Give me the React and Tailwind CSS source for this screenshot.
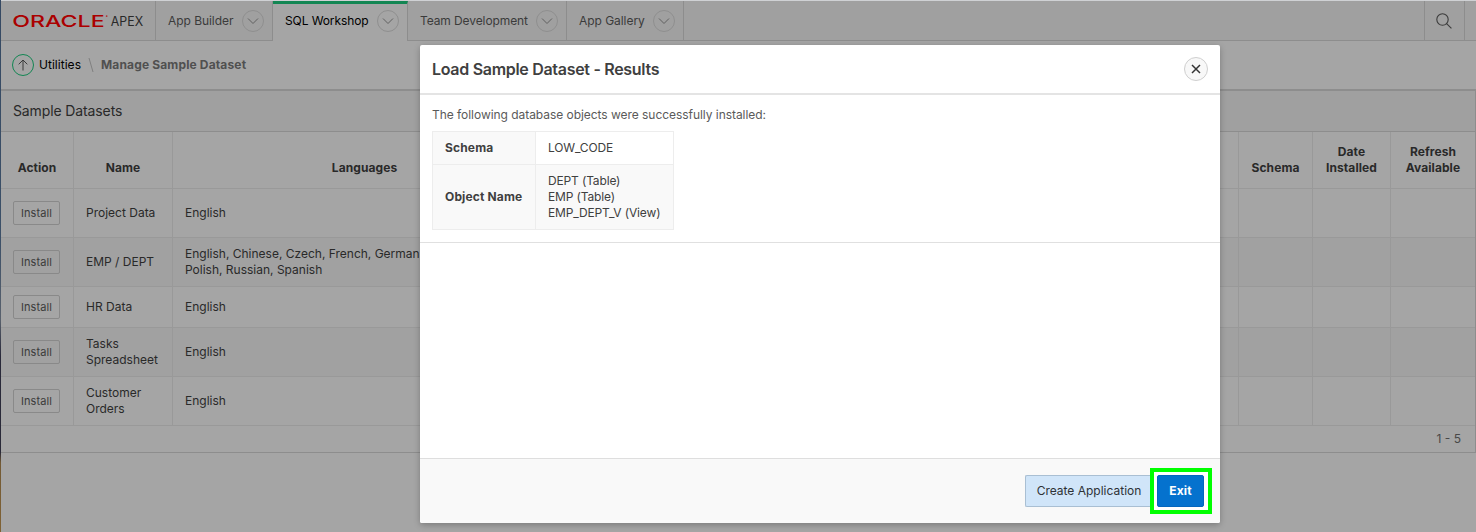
import React from "react";

const tabs = [
  { label: "App Builder", width: "w-[117px]", tracking: "tracking-[-0.05px]" },
  { label: "SQL Workshop", width: "w-[135px]", tracking: "tracking-[-0.1px]", active: true },
  { label: "Team Development", width: "w-[159px]", tracking: "tracking-[-0.1px]" },
  { label: "App Gallery", width: "w-[117px]", tracking: "tracking-[-0.05px]" },
];

const rows = [
  { name: ["Project Data"], languages: ["English"], height: "h-[49px]" },
  { name: ["EMP / DEPT"], languages: ["English, Chinese, Czech, French, German,", "Polish, Russian, Spanish"], height: "h-[49px]", alt: true },
  { name: ["HR Data"], languages: ["English"], height: "h-[41px]" },
  { name: ["Tasks", "Spreadsheet"], languages: ["English"], height: "h-[49px]", alt: true },
  { name: ["Customer", "Orders"], languages: ["English"], height: "h-[49px]" },
];

const columns = "grid grid-cols-[73px_99px_384px_682px_74px_78px_84px]";
const cell = "border-b border-r border-[#999999]";

function Lines({ items }) {
  return (
    <div>
      {items.map((item) => (
        <div key={item} className="whitespace-nowrap">{item}</div>
      ))}
    </div>
  );
}

function Logo() {
  return (
    <svg width="143" height="24" viewBox="0 0 143 24" className="block">
      <text x="-0.7" y="18" textLength="93" lengthAdjust="spacingAndGlyphs" fontFamily="Inter, sans-serif" fontSize="16.600" fontWeight="500" fill="#ab0000">ORACLE</text>
      <circle cx="94.3" cy="7" r="0.9" fill="#b03030" />
      <text x="98.500" y="17.500" textLength="32.500" lengthAdjust="spacingAndGlyphs" fontFamily="Inter, sans-serif" fontSize="13.500" fill="#292929">APEX</text>
    </svg>
  );
}

function Tab({ tab }) {
  return (
    <div
      className={
        "flex h-10 shrink-0 items-center justify-between border-r border-r-[#8d8d8d] pl-3 pr-2 " +
        tab.width +
        (tab.active ? " border-t-[3px] border-t-[#138653] bg-[#a5a5a5] text-black" : " border-b border-b-[#8d8d8d] text-[#3b3b3b]")
      }
    >
      <span className={"whitespace-nowrap " + tab.tracking + (tab.active ? " -mt-[3px]" : "")}>{tab.label}</span>
      <span className={"flex size-[22px] items-center justify-center rounded-full border border-[#8f8f8f]" + (tab.active ? " -mt-[3px]" : "")}>
        <svg width="12" height="8" viewBox="0 0 12 8" fill="none" stroke="#606060" strokeWidth="1">
          <path d="M1 1.500 6 6.500l5-5" />
        </svg>
      </span>
    </div>
  );
}

function Background() {
  return (
    <div className="flex h-[532px] w-[1476px] bg-[#a5a5a5]">
      <div className="w-px shrink-0 bg-[linear-gradient(to_bottom,#354963_0,#3c5068_45%,#59616d_60%,#29293a_67%,#292938_85%,#735a35_87%,#806234_100%)]" />
      <div className="flex min-w-0 grow flex-col">
        <div className="h-px shrink-0 bg-[#cfd1d4]" />
        <header className="flex h-10 shrink-0 bg-[#a0a0a0]">
          <div className="flex w-[155px] shrink-0 items-center border-b border-r border-[#8d8d8d] pl-3">
            <Logo />
          </div>
          {tabs.map((tab) => <Tab key={tab.label} tab={tab} />)}
          <div className="grow border-b border-r border-[#8d8d8d]" />
          <div className="flex w-10 items-center justify-center border-b border-r border-[#8d8d8d] pr-[2px]">
            <svg width="16" height="16" viewBox="0 0 16 16" fill="none" stroke="#3b3b3b" strokeWidth="1.1">
              <circle cx="6.500" cy="6.500" r="5.700" />
              <path d="m10.600 10.600 4.800 4.800" />
            </svg>
          </div>
          <div className="w-[11px] border-b border-[#8d8d8d]" />
        </header>
        <nav className="flex h-[48px] shrink-0 items-center pl-[11px]">
          <span className="flex size-[22px] items-center justify-center rounded-full border border-[#138653]">
            <svg width="12" height="12" viewBox="0 0 12 12" fill="none" stroke="#3b3b3b" strokeWidth="1">
              <path d="M6 11.500V1M1.700 5.300 6 1l4.300 4.300" />
            </svg>
          </span>
          <span className="ml-[5px] w-[42px] whitespace-nowrap tracking-[0.03px] text-black">Utilities</span>
          <svg width="8" height="16" viewBox="0 0 8 16" className="ml-[6px]" fill="none" stroke="#808080">
            <path d="m2 1 4 14" />
          </svg>
          <span className="ml-[6px] whitespace-nowrap font-bold tracking-[0.15px] text-[#505050]">Manage Sample Dataset</span>
        </nav>
        <section className="shrink-0 border-t-2 border-r border-t-[#8d8d8d] border-r-[#8d8d8d] text-[#292929]">
          <h2 className="flex h-[41px] items-center border-b border-[#8d8d8d] bg-[#a0a0a0] pb-[2px] pl-3 text-[14px] font-normal tracking-[-0.12px]">Sample Datasets</h2>
          <div className={columns + " h-[57px] text-center font-bold leading-4"}>
            {[["Action"], ["Name"], ["Languages"], [], ["Schema"], ["Date", "Installed"], ["Refresh", "Available"]].map((head, i) => (
              <div key={i} className={"flex items-end justify-center pb-3 tracking-[0.08px] " + cell + (i === 6 ? " border-r-0" : "")}>
                <Lines items={head} />
              </div>
            ))}
          </div>
          {rows.map((row) => (
            <div key={row.name[0]} className={columns + " leading-4 " + row.height + (row.alt ? " bg-[#a1a1a1]" : "")}>
              <div className={"flex items-center pl-3 " + cell}>
                <span className="flex h-6 w-[47px] items-center justify-center rounded-[2px] border border-[#898989] text-[11px] tracking-[0.08px] text-[#3b3b3b]">Install</span>
              </div>
              <div className={"flex items-center pl-3 " + cell}><Lines items={row.name} /></div>
              <div className={"flex items-center overflow-hidden pl-3 " + cell}><Lines items={row.languages} /></div>
              <div className={cell} />
              <div className={cell} />
              <div className={cell} />
              <div className="border-b border-[#999999]" />
            </div>
          ))}
          <div className="flex h-[27px] items-center justify-end border-b border-[#8d8d8d] pr-[14px] text-[#484848]">1 - 5</div>
        </section>
      </div>
    </div>
  );
}

function Dialog() {
  return (
    <div className="absolute left-[420px] top-[45px] flex h-[478px] w-[800px] flex-col rounded-[2px] bg-white text-[#404040] shadow-[0_2px_6px_rgba(0,0,0,0.25)]">
      <div className="flex h-[50px] shrink-0 items-center justify-between border-b-2 border-[#e4e4e4] pl-3 pr-3">
        <h1 className="text-[16px] font-semibold tracking-[-0.3px]">Load Sample Dataset - Results</h1>
        <button className="flex size-6 items-center justify-center rounded-full border border-[#cfcfcf] bg-[#f8f8f8]">
          <svg width="10" height="10" viewBox="0 0 10 10" fill="none" stroke="#333" strokeWidth="1.500">
            <path d="m1 1 8 8M9 1 1 9" />
          </svg>
        </button>
      </div>
      <div className="h-[148px] shrink-0 border-b border-[#e0e0e0] px-3 pt-3">
        <p className="h-6 leading-4 tracking-[-0.045px] text-[#5a5a5a]">The following database objects were successfully installed:</p>
        <table className="w-[242px] table-fixed border-collapse leading-4">
          <tbody>
            <tr className="h-[33px]">
              <th className="w-[103px] border border-[#ededed] bg-[#f9f9f9] p-0 pl-3 text-left font-bold tracking-[0.15px]">Schema</th>
              <td className="border border-[#ededed] p-0 pl-3 tracking-[-0.15px]">LOW_CODE</td>
            </tr>
            <tr className="h-[65px] bg-[#f9f9f9]">
              <th className="border border-[#ededed] p-0 pl-3 text-left font-bold tracking-[0.15px]">Object Name</th>
              <td className="border border-[#ededed] p-0 pl-3 tracking-[-0.15px]">
                <Lines items={["DEPT (Table)", "EMP (Table)", "EMP_DEPT_V (View)"]} />
              </td>
            </tr>
          </tbody>
        </table>
      </div>
      <div className="grow" />
      <footer className="flex h-[65px] shrink-0 items-center justify-end rounded-b-[2px] border-t border-[#dedede] bg-[#f9f9f9] pr-2">
        <button className="h-8 w-[125px] whitespace-nowrap rounded-l-[2px] border border-r-0 border-[#a9bfd3] bg-[#d0e5f9] pl-[2px] text-[#2e3236]">Create Application</button>
        <div className="flex h-[46px] w-[62px] items-center border-4 border-[#00ff00] bg-white pl-[3px]">
          <button className="h-8 w-[47px] rounded-[2px] border border-[#0567bd] bg-[#0572ce] font-bold tracking-[0.1px] text-white">Exit</button>
        </div>
      </footer>
    </div>
  );
}

export default function App() {
  return (
    <main className="relative h-[532px] w-[1476px] overflow-hidden font-['Inter',sans-serif] text-[12px]">
      <Background />
      <Dialog />
    </main>
  );
}
